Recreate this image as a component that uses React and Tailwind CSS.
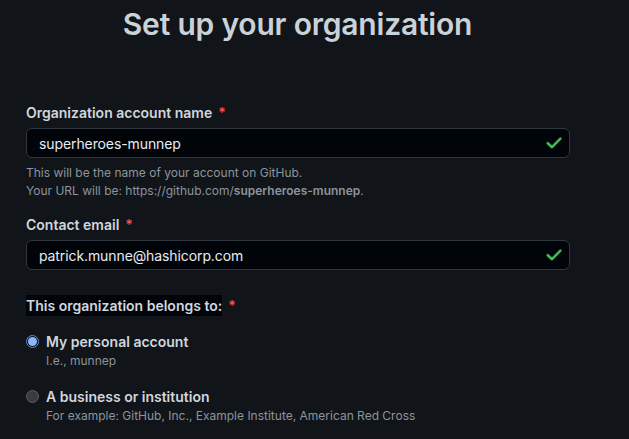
import React from 'react';

const FONT = { fontFamily: 'Inter, "Noto Sans", sans-serif' };

function Check() {
  return (
    <svg width="16" height="14" viewBox="0 0 16 14" className="text-[#3fb950]" fill="none">
      <path d="M1.8 7.2 L6 11.2 L14.4 2.6" stroke="currentColor" strokeWidth="2.6" strokeLinecap="round" strokeLinejoin="round" />
    </svg>
  );
}

function Field({ label, value, children }) {
  return (
    <div>
      <div className="flex items-center h-5 text-[14px] font-semibold text-[#d0d6de]">
        {label}
        <span className="ml-[6px] text-[#f85149]">*</span>
      </div>
      <div className="mt-[6px] h-[30px] rounded-[6px] border border-[#30363d] bg-[#010409] flex items-center justify-between pl-3 pr-[7px]">
        <span className="text-[14px] tracking-[-0.1px] text-[#e6edf3]">{value}</span>
        <Check />
      </div>
      {children}
    </div>
  );
}

function Radio({ checked, title, hint }) {
  return (
    <div className="flex">
      <div className="pt-[3px]">
        {checked ? (
          <div className="w-[13px] h-[13px] rounded-full border border-[#4d8fe6] bg-[#0d1117] flex items-center justify-center">
            <div className="w-[9px] h-[9px] rounded-full bg-[#8ab8f6]" />
          </div>
        ) : (
          <div className="w-[13px] h-[13px] rounded-full border border-[#5a5f66] bg-[#3a3b3d]" />
        )}
      </div>
      <div className="ml-[7px]">
        <div className="text-[14px] font-semibold text-[#d0d6de] leading-5">{title}</div>
        <div className="text-[12px] text-[#8b949e] leading-[18px]">{hint}</div>
      </div>
    </div>
  );
}

export default function App() {
  return (
    <div className="w-[629px] h-[439px] overflow-hidden bg-[#111418]" style={FONT}>
      <h1 className="w-[595px] pt-[4px] text-center text-[30px] leading-[40px] font-semibold text-[#c9d1d9] tracking-[-0.2px]">
        Set up your organization
      </h1>

      <div className="pl-[26px] pr-[59px] pt-[58px]">
        <Field label="Organization account name" value="superheroes-munnep">
          <div className="mt-[6px] text-[12px] leading-[18px] text-[#8b949e]">
            <div>This will be the name of your account on GitHub.</div>
            <div>
              Your URL will be: https://github.com/<span className="font-semibold">superheroes-munnep</span>.
            </div>
          </div>
        </Field>

        <div className="mt-[14px]">
          <Field label="Contact email" value="patrick.munne@hashicorp.com" />
        </div>

        <div className="mt-[25px] flex items-center h-[21px]">
          <span className="bg-[#010409] h-[21px] flex items-center text-[14px] font-semibold text-[#d0d6de]">
            This organization belongs to:
          </span>
          <span className="ml-[6px] text-[14px] font-semibold text-[#f85149]">*</span>
        </div>

        <div className="mt-[16px] flex flex-col gap-[17px]">
          <Radio checked title="My personal account" hint="I.e., munnep" />
          <Radio title="A business or institution" hint="For example: GitHub, Inc., Example Institute, American Red Cross" />
        </div>
      </div>
    </div>
  );
}
